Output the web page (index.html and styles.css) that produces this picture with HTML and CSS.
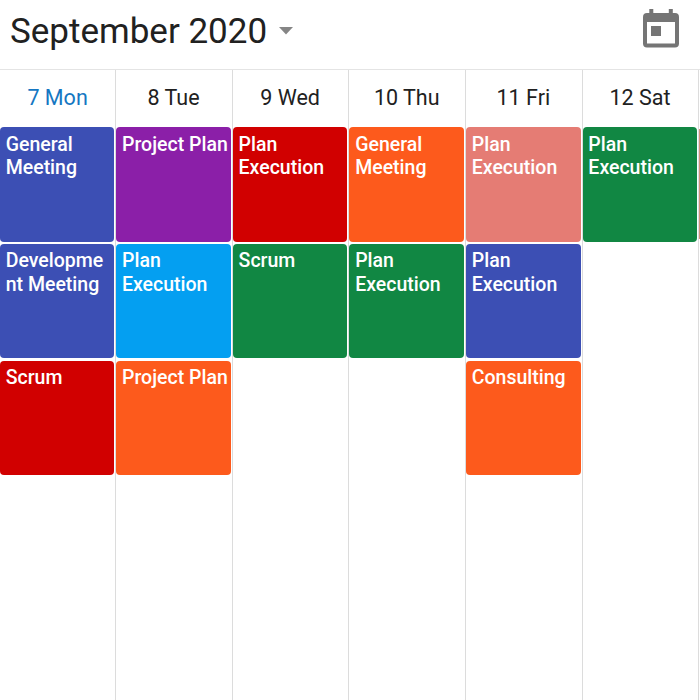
FILE: index.html
```
<!DOCTYPE html>
<html lang="en">
<head>
<meta charset="utf-8">
<title>September 2020</title>
<link rel="stylesheet" href="styles.css">
</head>
<body>
<header class="toolbar">
  <h1 class="month">September 2020</h1>
  <svg class="caret" width="14" height="8" viewBox="0 0 14 8"><path d="M0 0h14L7 7.5z" fill="#858585"/></svg>
  <svg class="today" width="36" height="40" viewBox="0 0 36 40">
    <path fill="#757575" fill-rule="evenodd" d="M6.300 0h4v4h15.500V0h4v4H32a4 4 0 0 1 4 4v26.500a4 4 0 0 1-4 4H4a4 4 0 0 1-4-4V8a4 4 0 0 1 4-4h2.300zM4 13v21.500h28V13zM8 17h10v10H8z"/>
  </svg>
</header>
<main class="week">
  <section class="day">
    <h2 class="date current">7 Mon</h2>
    <div class="event indigo">General Meeting</div>
    <div class="event indigo">Development Meeting</div>
    <div class="event red">Scrum</div>
  </section>
  <section class="day">
    <h2 class="date">8 Tue</h2>
    <div class="event purple">Project Plan</div>
    <div class="event blue">Plan Execution</div>
    <div class="event orange">Project Plan</div>
  </section>
  <section class="day">
    <h2 class="date">9 Wed</h2>
    <div class="event red">Plan Execution</div>
    <div class="event green">Scrum</div>
  </section>
  <section class="day">
    <h2 class="date">10 Thu</h2>
    <div class="event orange">General Meeting</div>
    <div class="event green">Plan Execution</div>
  </section>
  <section class="day">
    <h2 class="date">11 Fri</h2>
    <div class="event salmon">Plan Execution</div>
    <div class="event indigo">Plan Execution</div>
    <div class="event orange">Consulting</div>
  </section>
  <section class="day">
    <h2 class="date">12 Sat</h2>
    <div class="event green">Plan Execution</div>
  </section>
  <section class="day next">
    <div class="event edge"></div>
  </section>
</main>
</body>
</html>
```
FILE: styles.css
```
* { box-sizing: border-box; }

body {
  margin: 0;
  width: 700px;
  height: 700px;
  overflow: hidden;
  display: flex;
  flex-direction: column;
  background: #fff;
  color: #212121;
  font-family: Roboto, sans-serif;
}

.toolbar {
  height: 70px;
  flex: none;
  display: flex;
  align-items: flex-start;
  padding: 9px 21px 0 10px;
  border-bottom: 1px solid #e4e4e4;
}

.month {
  margin: 2px 0 0;
  font-size: 35px;
  line-height: 41px;
  font-weight: 400;
  white-space: nowrap;
}

.caret { margin: 18px 0 0 12px; }
.today { margin-left: auto; }

.week {
  flex: 1;
  display: grid;
  grid-template-columns: 116.300px repeat(5, 116.600px) 1fr;
}

.day {
  display: flex;
  flex-direction: column;
  gap: 2.2px;
  padding-right: 1.1px;
  border-right: 1px solid #dcdcdc;
}

.date {
  margin: 0 0 -2px;
  height: 57px;
  padding-top: 14px;
  font-size: 21.500px;
  line-height: 28px;
  font-weight: 400;
  text-align: center;
}

.current { color: #1577c2; padding-left: 1px; }

.event {
  height: 114.500px;
  flex: none;
  padding: 5.500px 2px 0 5.700px;
  border-radius: 4px;
  color: #fff;
  font-size: 19.500px;
  line-height: 23.400px;
  font-weight: 500;
  overflow-wrap: anywhere;
}

/* the following day starts at the window's right edge */
.next {
  padding: 58.500px 0 0;
  border: 0;
}

.edge {
  height: 110px;
  padding: 0;
  border-radius: 0;
  background: #d5917f;
}

.indigo { background: #3c4fb4; }
.red { background: #d10000; }
.purple { background: #8b1fa8; }
.blue { background: #049ff1; }
.orange { background: #fd5a1c; }
.green { background: #118743; }
.salmon { background: #e57c74; }
```
